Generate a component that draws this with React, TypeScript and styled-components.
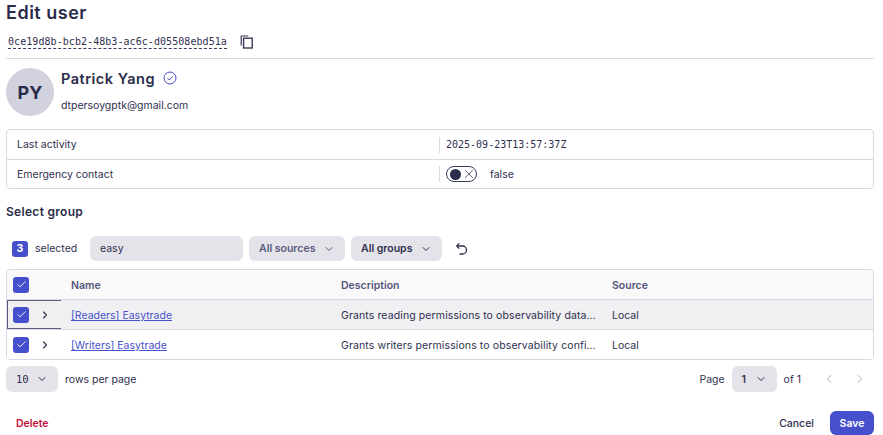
import styled, { createGlobalStyle } from 'styled-components';
import { Check, ChevronDown, ChevronLeft, ChevronRight, X } from 'lucide-react';

const GlobalStyle = createGlobalStyle`
  html, body {
    margin: 0;
    padding: 0;
    background: #fff;
    overflow: hidden;
  }
  * {
    box-sizing: border-box;
  }
`;

const sans = `Inter, "Liberation Sans", sans-serif`;
const mono = `"DejaVu Sans Mono", "Liberation Mono", monospace`;

const Page = styled.div`
  width: 883px;
  height: 435px;
  padding: 0 9px 0 6px;
  font-family: ${sans};
  font-size: 10.5px;
  color: #2f2f4f;
  overflow: hidden;
`;

const Title = styled.h1`
  margin: 0;
  height: 25px;
  line-height: 25px;
  font-size: 18px;
  font-weight: 600;
  letter-spacing: 0.5px;
  color: #2a2c4c;
`;

const IdRow = styled.div`
  height: 34px;
  display: flex;
  align-items: center;
  gap: 13px;
  padding: 0 0 0 2px;
  border-bottom: 1px solid #d8d8e6;
`;

const IdText = styled.span`
  font-family: ${mono};
  font-size: 10px;
  letter-spacing: 0.06px;
  line-height: 13px;
  border-bottom: 1px dashed #3a3a5a;
`;

const UserRow = styled.div`
  height: 70px;
  padding-top: 9px;
  display: flex;
  align-items: flex-start;
  gap: 7px;
`;

const Avatar = styled.div`
  width: 48px;
  height: 48px;
  border-radius: 50%;
  background: #d2d2de;
  display: flex;
  align-items: center;
  justify-content: center;
  font-size: 18px;
  font-weight: 700;
  color: #2a2c4c;
`;

const UserInfo = styled.div`
  display: flex;
  flex-direction: column;
  gap: 11px;
`;

const NameRow = styled.div`
  height: 20px;
  display: flex;
  align-items: center;
  gap: 8px;
  font-size: 14.5px;
  font-weight: 600;
  letter-spacing: 0.5px;
  color: #2a2c4c;
`;

const Card = styled.div`
  border: 1px solid #d8d8e6;
  border-radius: 4px;
  overflow: hidden;
`;

const InfoRow = styled.div`
  height: 29px;
  display: grid;
  grid-template-columns: 422px 1fr;
  align-items: center;
  padding-left: 10px;
  & + & {
    border-top: 1px solid #d8d8e6;
  }
`;

const InfoValue = styled.div`
  height: 16px;
  display: flex;
  align-items: center;
  gap: 13px;
  padding-left: 6px;
  border-left: 1px solid #d8d8e6;
`;

const MonoValue = styled.span`
  font-family: ${mono};
  font-size: 10px;
`;

const Toggle = styled.span`
  width: 31px;
  height: 16px;
  border: 1px solid #3a3a5a;
  border-radius: 8px;
  display: flex;
  align-items: center;
  gap: 1px;
  padding-left: 3px;
`;

const Knob = styled.span`
  width: 11px;
  height: 11px;
  border-radius: 50%;
  background: #2a2c4c;
`;

const SectionTitle = styled.h2`
  margin: 15px 0 0;
  height: 16px;
  line-height: 16px;
  font-size: 12px;
  font-weight: 600;
  letter-spacing: 0.3px;
  color: #2a2c4c;
`;

const Toolbar = styled.div`
  margin-top: 16px;
  height: 25px;
  display: flex;
  align-items: center;
  gap: 6px;
`;

const Count = styled.span`
  width: 16px;
  height: 16px;
  margin-left: 6px;
  border-radius: 3px;
  background: #4750cc;
  color: #fff;
  font-weight: 700;
  display: flex;
  align-items: center;
  justify-content: center;
`;

const SelectedLabel = styled.span`
  margin-left: 1px;
  margin-right: 8px;
  width: 41px;
`;

const Search = styled.div`
  width: 153px;
  height: 25px;
  border-radius: 6px;
  background: #e3e3e9;
  display: flex;
  align-items: center;
  padding-left: 10px;
`;

const Select = styled.div<{ $muted?: boolean; $width: number; $mono?: boolean }>`
  width: ${p => p.$width}px;
  height: 25px;
  border-radius: 6px;
  background: #e3e3e9;
  display: flex;
  align-items: center;
  justify-content: space-between;
  padding: 0 10px;
  font-weight: ${p => (p.$mono ? 400 : 600)};
  font-family: ${p => (p.$mono ? mono : sans)};
  color: ${p => (p.$muted ? '#5c5c80' : '#2f2f4f')};
`;

const PageSelect = styled(Select)`
  height: 26px;
`;

const IconButton = styled.span`
  margin-left: 7px;
  display: flex;
`;

const Table = styled(Card)`
  margin-top: 8px;
  display: grid;
  grid-template-columns: 54px 280px 271px 1fr;
`;

const Row = styled.div<{ $head?: boolean; $hover?: boolean }>`
  grid-column: 1 / -1;
  display: grid;
  grid-template-columns: subgrid;
  height: ${p => (p.$head ? 29 : 30)}px;
  align-items: center;
  background: ${p => (p.$head ? '#f9f9fa' : p.$hover ? '#f0f0f3' : '#fff')};
  font-weight: ${p => (p.$head ? 600 : 400)};
  color: ${p => (p.$head ? '#55557a' : '#2f2f4f')};
  & + & {
    border-top: 1px solid #d8d8e6;
  }
`;

const ControlCell = styled.div<{ $focus?: boolean }>`
  height: 100%;
  display: flex;
  align-items: center;
  gap: 10px;
  border-style: solid;
  border-color: #5c5c80;
  border-width: ${p => (p.$focus ? '1px 0 1px 1px' : '0')};
  padding-left: ${p => (p.$focus ? '5px' : '6px')};
`;

const TextCell = styled.div`
  padding-top: 2px;
`;

const NameCell = styled(TextCell)`
  padding-left: 10px;
`;

const Box = styled.span`
  width: 16px;
  height: 16px;
  border-radius: 3px;
  background: #4750cc;
  display: flex;
  align-items: center;
  justify-content: center;
  color: #fff;
`;

const NameLink = styled.a`
  color: #4750cc;
  text-decoration: underline;
`;

const Ellipsis = styled(TextCell)`
  width: 257px;
  letter-spacing: 0.11px;
  white-space: nowrap;
  overflow: hidden;
  text-overflow: ellipsis;
`;

const Pagination = styled.div`
  margin-top: 6px;
  height: 26px;
  display: flex;
  align-items: center;
  gap: 7px;
`;

const Spacer = styled.div`
  flex: 1;
`;

const PagerArrows = styled.div`
  display: flex;
  gap: 17px;
  margin: 0 7px 0 14px;
  color: #a8a8bc;
`;

const Footer = styled.div`
  margin-top: 19px;
  height: 24px;
  display: flex;
  align-items: center;
  font-weight: 600;
`;

const Delete = styled.span`
  margin-left: 10px;
  color: #c8103e;
`;

const Cancel = styled.span`
  margin-right: 16px;
  font-weight: 500;
`;

const Save = styled.span`
  width: 44px;
  height: 24px;
  border-radius: 6px;
  background: #4750cc;
  color: #fff;
  display: flex;
  align-items: center;
  justify-content: center;
`;

const CopyIcon = () => (
  <svg width="14" height="14" viewBox="0 0 14 14" fill="none" stroke="#3a3a5a" strokeWidth="1.2">
    <path d="M1.2 10.5V1h7" />
    <rect x="3.6" y="3.2" width="8.6" height="9.8" strokeWidth="1.4" />
  </svg>
);

const ResetIcon = () => (
  <svg width="13" height="14" viewBox="0 0 13 14" fill="none" stroke="#2f2f4f" strokeWidth="1.3">
    <path d="M2 4h5.5a4 4 0 0 1 0 8H4.5" />
    <path d="M4.3 1.4 1.7 4l2.6 2.6" />
  </svg>
);

const VerifiedIcon = () => (
  <svg width="14" height="14" viewBox="0 0 14 14" fill="none" stroke="#4750cc" strokeWidth="1">
    <circle cx="7" cy="7" r="6" />
    <path d="M4.5 7.2 6.3 9l3.3-3.6" />
  </svg>
);

const groups = [
  {
    name: '[Readers] Easytrade',
    description: 'Grants reading permissions to observability data and more',
    hover: true,
  },
  {
    name: '[Writers] Easytrade',
    description: 'Grants writers permissions to observability configuration',
    hover: false,
  },
];

export default function App() {
  return (
    <Page>
      <GlobalStyle />
      <Title>Edit user</Title>
      <IdRow>
        <IdText>0ce19d8b-bcb2-48b3-ac6c-d05508ebd51a</IdText>
        <CopyIcon />
      </IdRow>
      <UserRow>
        <Avatar>PY</Avatar>
        <UserInfo>
          <NameRow>
            Patrick Yang
            <VerifiedIcon />
          </NameRow>
          <span>dtpersoygptk@gmail.com</span>
        </UserInfo>
      </UserRow>
      <Card>
        <InfoRow>
          <span>Last activity</span>
          <InfoValue>
            <MonoValue>2025-09-23T13:57:37Z</MonoValue>
          </InfoValue>
        </InfoRow>
        <InfoRow>
          <span>Emergency contact</span>
          <InfoValue>
            <Toggle>
              <Knob />
              <X size={14} strokeWidth={1.3} />
            </Toggle>
            <span>false</span>
          </InfoValue>
        </InfoRow>
      </Card>
      <SectionTitle>Select group</SectionTitle>
      <Toolbar>
        <Count>3</Count>
        <SelectedLabel>selected</SelectedLabel>
        <Search>easy</Search>
        <Select $muted $width={96}>
          All sources
          <ChevronDown size={12} strokeWidth={2} />
        </Select>
        <Select $width={91}>
          All groups
          <ChevronDown size={12} strokeWidth={2} />
        </Select>
        <IconButton>
          <ResetIcon />
        </IconButton>
      </Toolbar>
      <Table>
        <Row $head>
          <ControlCell>
            <Box>
              <Check size={11} strokeWidth={2} />
            </Box>
          </ControlCell>
          <NameCell>Name</NameCell>
          <TextCell>Description</TextCell>
          <TextCell>Source</TextCell>
        </Row>
        {groups.map(group => (
          <Row key={group.name} $hover={group.hover}>
            <ControlCell $focus={group.hover}>
              <Box>
                <Check size={11} strokeWidth={2} />
              </Box>
              <ChevronRight size={12} strokeWidth={2.2} />
            </ControlCell>
            <NameCell>
              <NameLink>{group.name}</NameLink>
            </NameCell>
            <Ellipsis>{group.description}</Ellipsis>
            <TextCell>Local</TextCell>
          </Row>
        ))}
      </Table>
      <Pagination>
        <PageSelect $mono $width={52}>
          10
          <ChevronDown size={12} strokeWidth={2} />
        </PageSelect>
        <span>rows per page</span>
        <Spacer />
        <span>Page</span>
        <PageSelect $width={45}>
          1
          <ChevronDown size={12} strokeWidth={2} />
        </PageSelect>
        <span>of 1</span>
        <PagerArrows>
          <ChevronLeft size={14} strokeWidth={1.6} />
          <ChevronRight size={14} strokeWidth={1.6} />
        </PagerArrows>
      </Pagination>
      <Footer>
        <Delete>Delete</Delete>
        <Spacer />
        <Cancel>Cancel</Cancel>
        <Save>Save</Save>
      </Footer>
    </Page>
  );
}
